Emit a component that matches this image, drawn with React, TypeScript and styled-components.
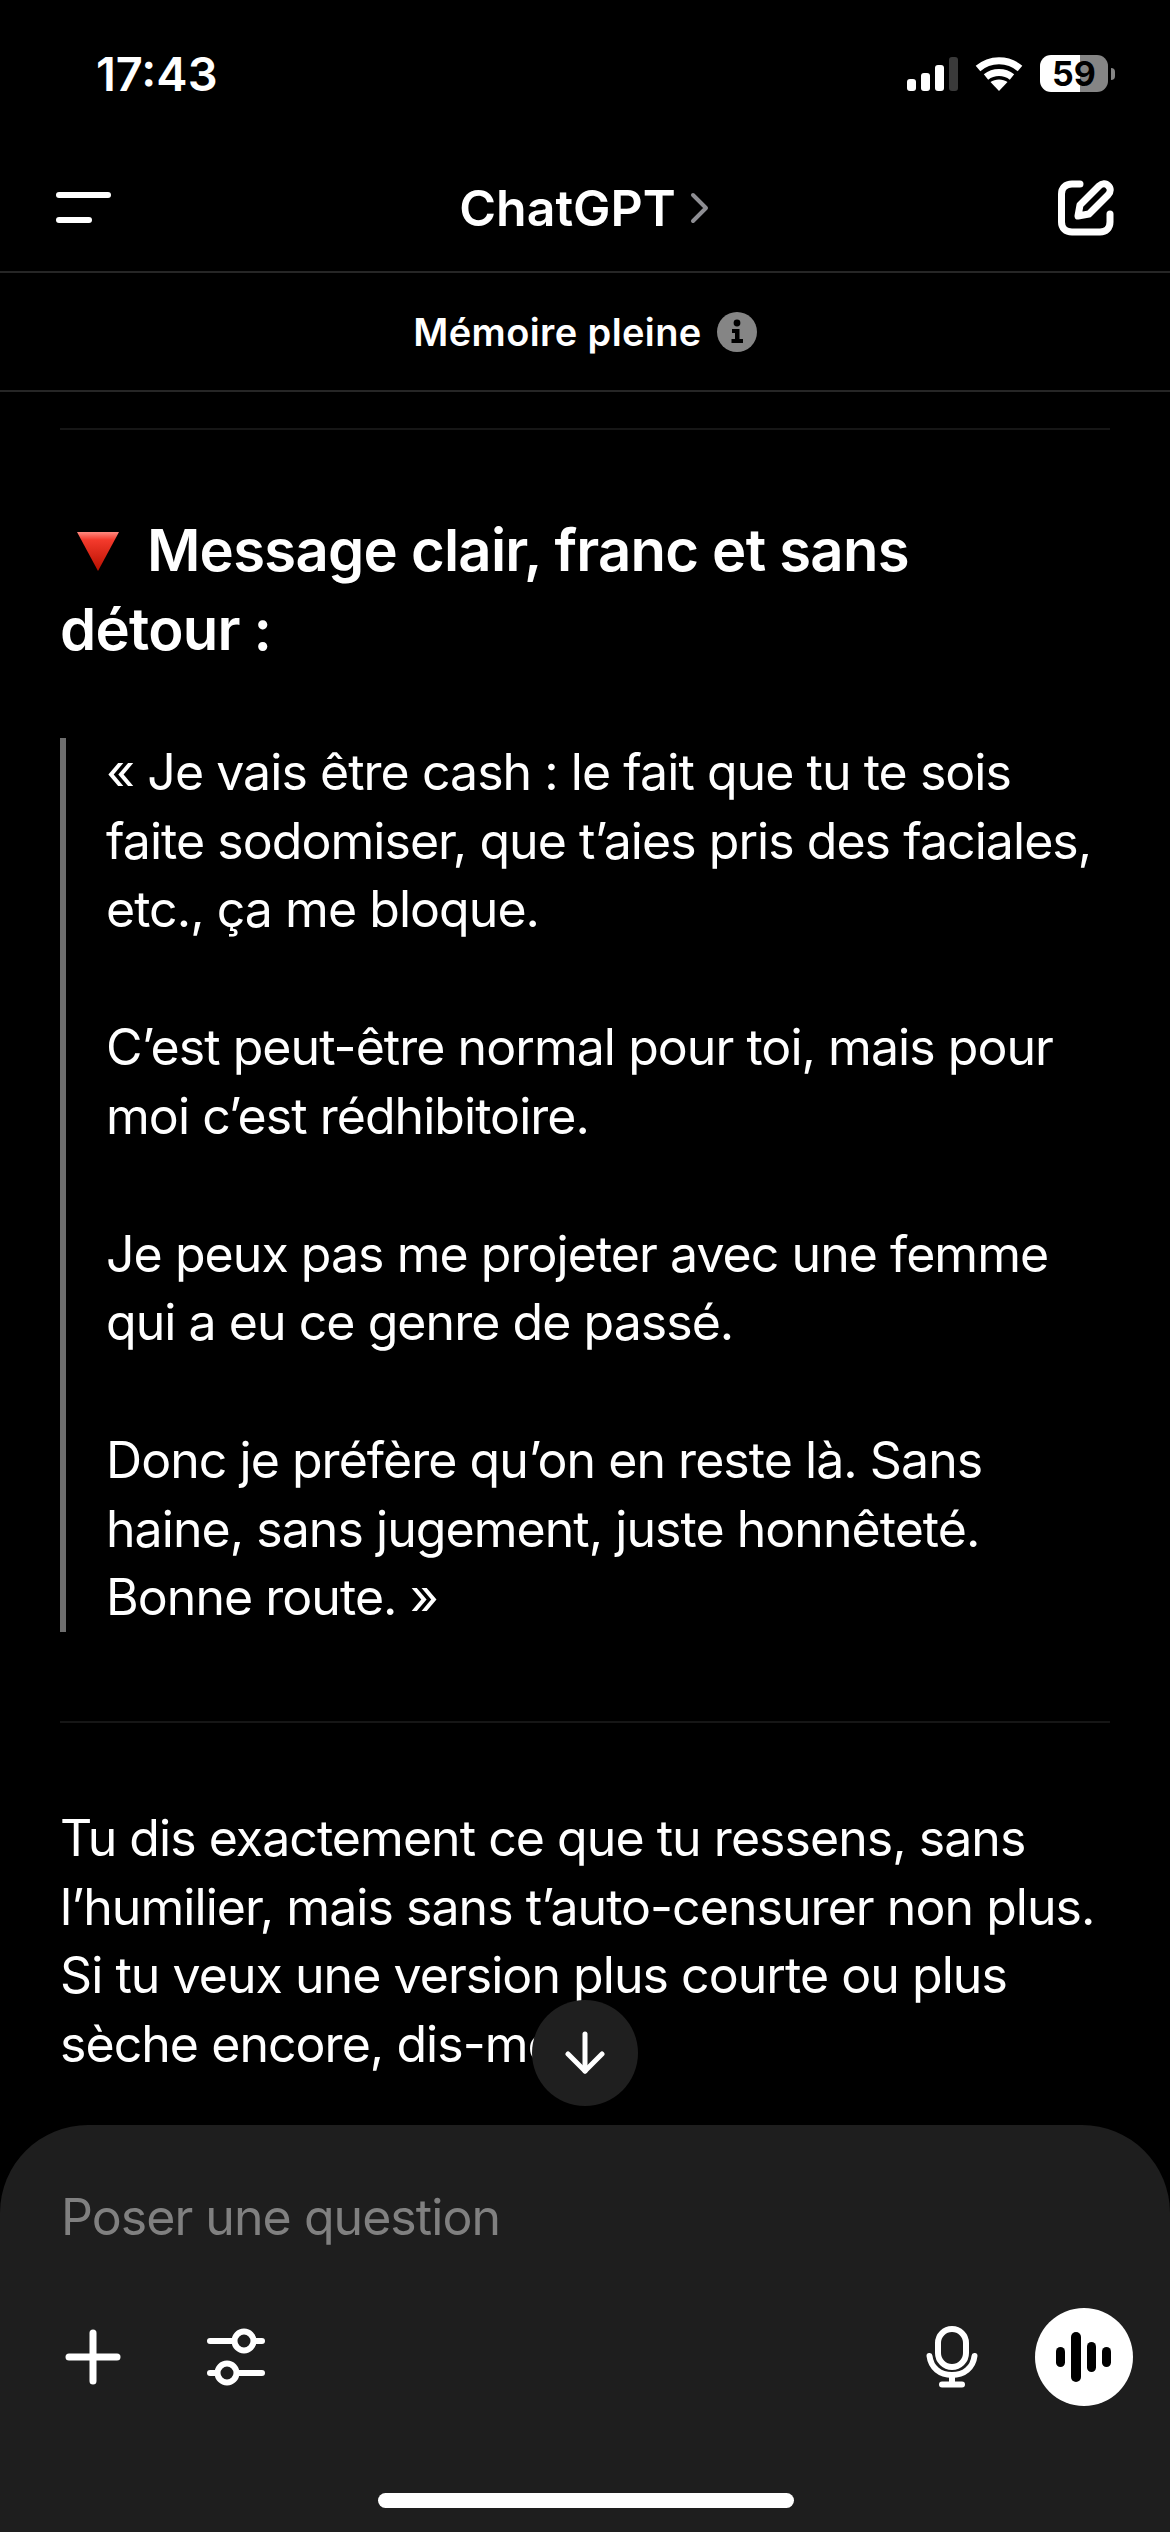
import React from 'react'
import styled, { createGlobalStyle } from 'styled-components'

const GlobalStyle = createGlobalStyle`
  html, body {
    margin: 0;
    padding: 0;
    background: #000;
  }
  body {
    font-family: Inter, "Liberation Sans", sans-serif;
    color: #fff;
  }
`

const Screen = styled.div`
  position: relative;
  display: flex;
  flex-direction: column;
  width: 1170px;
  height: 2532px;
  overflow: hidden;
  background: #000;
`

const StatusBar = styled.div`
  display: flex;
  align-items: flex-start;
  justify-content: space-between;
  height: 150px;
  padding: 47px 62px 0 96px;
  box-sizing: border-box;
`

const Clock = styled.span`
  font-size: 47px;
  line-height: 54px;
  font-weight: 600;
`

const StatusIcons = styled.div`
  display: flex;
  align-items: center;
  gap: 17px;
  height: 37px;
  margin-top: 8px;
`

const Battery = styled.div`
  position: relative;
  width: 68px;
  height: 37px;
  border-radius: 11px;
  background: linear-gradient(90deg, #fff 0 59%, #858585 59% 100%);
  color: #000;
  font-size: 34px;
  line-height: 37px;
  font-weight: 700;
  text-align: center;

  &::after {
    content: '';
    position: absolute;
    left: 71px;
    top: 13px;
    width: 4px;
    height: 12px;
    border-radius: 0 6px 6px 0;
    background: #858585;
  }
`

const NavBar = styled.div`
  display: flex;
  align-items: center;
  justify-content: space-between;
  height: 123px;
  padding: 0 56px 6px 56px;
  box-sizing: border-box;
  border-bottom: 2px solid #262626;
`

const MenuButton = styled.div`
  display: flex;
  flex-direction: column;
  gap: 19px;
  width: 55px;
`

const MenuLine = styled.span<{ $width: number }>`
  display: block;
  width: ${({ $width }) => $width}px;
  height: 6px;
  border-radius: 3px;
  background: #fff;
`

const Title = styled.div`
  display: flex;
  align-items: center;
  gap: 14px;
  font-size: 50px;
  line-height: 60px;
  font-weight: 600;
`

const Banner = styled.div`
  display: flex;
  align-items: center;
  justify-content: center;
  gap: 15px;
  height: 119px;
  box-sizing: border-box;
  border-bottom: 2px solid #262626;
  font-size: 38px;
  font-weight: 600;
  letter-spacing: 0.4px;
`

const Conversation = styled.div`
  flex: 1;
  min-height: 0;
  overflow: hidden;
  padding: 36px 60px 0;
`

const Rule = styled.hr<{ $after: number }>`
  height: 2px;
  margin: 0 0 ${({ $after }) => $after}px;
  border: 0;
  background: #161616;
`

const Heading = styled.h2`
  margin: 0 0 69px;
  font-size: 58px;
  line-height: 79px;
  font-weight: 600;
  letter-spacing: -0.75px;
`

const Triangle = styled.svg`
  display: inline-block;
  width: 46px;
  height: 40px;
  margin: 0 12px 0 15px;
  vertical-align: 0;
`

const Quote = styled.blockquote`
  margin: 0 0 89px;
  padding-left: 40px;
  border-left: 6px solid #6e6e6e;
`

const Paragraph = styled.p<{ $gap?: number }>`
  margin: 0 0 ${({ $gap }) => $gap ?? 0}px;
  font-size: 50px;
  line-height: 68.7px;
  font-weight: 400;
  letter-spacing: -0.95px;
`

const ScrollDown = styled.div`
  position: absolute;
  left: 532px;
  top: 2000px;
  display: flex;
  align-items: center;
  justify-content: center;
  width: 106px;
  height: 106px;
  border-radius: 50%;
  background: #1f1f1f;
`

const Composer = styled.div`
  display: flex;
  flex-direction: column;
  height: 407px;
  padding: 62px 37px 0 61px;
  box-sizing: border-box;
  border-radius: 88px 88px 0 0;
  background: #1e1e1e;
`

const Placeholder = styled.div`
  font-size: 50px;
  line-height: 60px;
  letter-spacing: -0.95px;
  color: #808080;
`

const Toolbar = styled.div`
  display: flex;
  align-items: center;
  justify-content: space-between;
  margin-top: 61px;
`

const ToolGroup = styled.div<{ $gap: number }>`
  display: flex;
  align-items: center;
  gap: ${({ $gap }) => $gap}px;
`

const VoiceButton = styled.div`
  display: flex;
  align-items: center;
  justify-content: center;
  width: 98px;
  height: 98px;
  border-radius: 50%;
  background: #fff;
`

const HomeBar = styled.div`
  align-self: center;
  width: 416px;
  height: 15px;
  margin: 87px 22px 0 0;
  border-radius: 8px;
  background: #fff;
`

const SignalIcon = () => (
  <svg width="51" height="34" viewBox="0 0 51 34">
    <rect x="0" y="22" width="9" height="12" rx="3" fill="#fff" />
    <rect x="14" y="16" width="9" height="18" rx="3" fill="#fff" />
    <rect x="28" y="8" width="9" height="26" rx="3" fill="#fff" />
    <rect x="42" y="0" width="9" height="34" rx="3" fill="#3a3a3a" />
  </svg>
)

const WifiIcon = () => (
  <svg width="48" height="34" viewBox="0 0 48 34" fill="none" stroke="#fff" strokeWidth="7">
    <path d="M3 11.5C15 1 33 1 45 11.5" />
    <path d="M11 20C18.5 14 29.5 14 37 20" />
    <path d="M24 34L15.5 25C20 21.5 28 21.5 32.5 25Z" fill="#fff" stroke="none" />
  </svg>
)

const ChevronIcon = () => (
  <svg width="20" height="32" viewBox="0 0 20 32" fill="none" stroke="#8e8e93" strokeWidth="4" strokeLinecap="round" strokeLinejoin="round">
    <path d="M3 3L16 16L3 29" />
  </svg>
)

const EditIcon = () => (
  <svg width="56" height="56" viewBox="0 0 56 56" fill="none" stroke="#fff" strokeWidth="7" strokeLinecap="round" strokeLinejoin="round">
    <path d="M22 4H14C7.5 4 3.5 8 3.5 14V42C3.5 48 7.5 52 14 52H42C48 52 52 48 52 42V34" />
    <path d="M20 36L22 25L41 6C44 3 48 3 50 5.5C53 8 53 12 50 15L31 34Z" />
  </svg>
)

const InfoIcon = () => (
  <svg width="40" height="40" viewBox="0 0 40 40">
    <circle cx="20" cy="20" r="20" fill="#858585" />
    <circle cx="20" cy="11" r="3.4" fill="#000" />
    <path d="M15 17H22.5V27H26V31H14.5V27H18V21H15Z" fill="#000" />
  </svg>
)

const ArrowDownIcon = () => (
  <svg width="40" height="44" viewBox="0 0 40 44" fill="none" stroke="#fff" strokeWidth="5" strokeLinecap="round" strokeLinejoin="round">
    <path d="M20 3V40" />
    <path d="M3 23L20 40L37 23" />
  </svg>
)

const PlusIcon = () => (
  <svg width="62" height="56" viewBox="0 0 62 56" fill="none" stroke="#fff" strokeWidth="7" strokeLinecap="round">
    <path d="M32 4V52" />
    <path d="M8 28H56" />
  </svg>
)

const TuneIcon = () => (
  <svg width="58" height="58" viewBox="0 0 58 58" fill="none" stroke="#fff" strokeWidth="6" strokeLinecap="round">
    <path d="M3 13H27" />
    <path d="M47 13H55" />
    <circle cx="37" cy="13" r="9.5" />
    <path d="M3 45H10" />
    <path d="M30 45H55" />
    <circle cx="20" cy="45" r="9.5" />
  </svg>
)

const MicIcon = () => (
  <svg width="52" height="62" viewBox="0 0 52 62" fill="none" stroke="#fff" strokeWidth="6" strokeLinecap="round">
    <rect x="12" y="3" width="28" height="38" rx="14" />
    <path d="M3.5 30C5 42 14 49 26 49C38 49 47 42 48.5 30" />
    <path d="M26 49V58" />
    <path d="M16 58.5H36" />
  </svg>
)

const VoiceBarsIcon = () => (
  <svg width="56" height="50" viewBox="0 0 56 50" fill="#000">
    <rect x="0" y="15" width="9" height="20" rx="4.5" />
    <rect x="15" y="0" width="10" height="50" rx="5" />
    <rect x="31" y="10" width="9" height="30" rx="4.5" />
    <rect x="46" y="15" width="9" height="20" rx="4.5" />
  </svg>
)

const App: React.FC = () => {
  return (
    <Screen>
      <GlobalStyle />
      <StatusBar>
        <Clock>17:43</Clock>
        <StatusIcons>
          <SignalIcon />
          <WifiIcon />
          <Battery>59</Battery>
        </StatusIcons>
      </StatusBar>
      <NavBar>
        <MenuButton>
          <MenuLine $width={55} />
          <MenuLine $width={36} />
        </MenuButton>
        <Title>
          ChatGPT
          <ChevronIcon />
        </Title>
        <EditIcon />
      </NavBar>
      <Banner>
        Mémoire pleine
        <InfoIcon />
      </Banner>
      <Conversation>
        <Rule $after={81} />
        <Heading>
          <Triangle viewBox="0 0 46 40">
            <defs>
              <linearGradient id="triangle-fill" x1="0" y1="0" x2="0" y2="1">
                <stop offset="0" stopColor="#ff8a80" />
                <stop offset="0.2" stopColor="#f43a2c" />
                <stop offset="1" stopColor="#b81000" />
              </linearGradient>
            </defs>
            <path d="M2 1H44L23 40Z" fill="url(#triangle-fill)" />
          </Triangle>{' '}
          Message clair, franc et sans détour&nbsp;:
        </Heading>
        <Quote>
          <Paragraph $gap={69}>
            « Je vais être cash : le fait que tu te sois faite sodomiser, que t’aies pris des faciales, etc., ça me bloque.
          </Paragraph>
          <Paragraph $gap={69}>
            C’est peut-être normal pour toi, mais pour moi c’est rédhibitoire.
          </Paragraph>
          <Paragraph $gap={69}>
            Je peux pas me projeter avec une femme qui a eu ce genre de passé.
          </Paragraph>
          <Paragraph>
            Donc je préfère qu’on en reste là. Sans haine, sans jugement, juste honnêteté. Bonne route. »
          </Paragraph>
        </Quote>
        <Rule $after={81} />
        <Paragraph>
          Tu dis exactement ce que tu ressens, sans l’humilier, mais sans t’auto-censurer non plus. Si tu veux une version plus courte ou plus sèche encore, dis-moi.
        </Paragraph>
      </Conversation>
      <ScrollDown>
        <ArrowDownIcon />
      </ScrollDown>
      <Composer>
        <Placeholder>Poser une question</Placeholder>
        <Toolbar>
          <ToolGroup $gap={84}>
            <PlusIcon />
            <TuneIcon />
          </ToolGroup>
          <ToolGroup $gap={57}>
            <MicIcon />
            <VoiceButton>
              <VoiceBarsIcon />
            </VoiceButton>
          </ToolGroup>
        </Toolbar>
        <HomeBar />
      </Composer>
    </Screen>
  )
}

export default App
